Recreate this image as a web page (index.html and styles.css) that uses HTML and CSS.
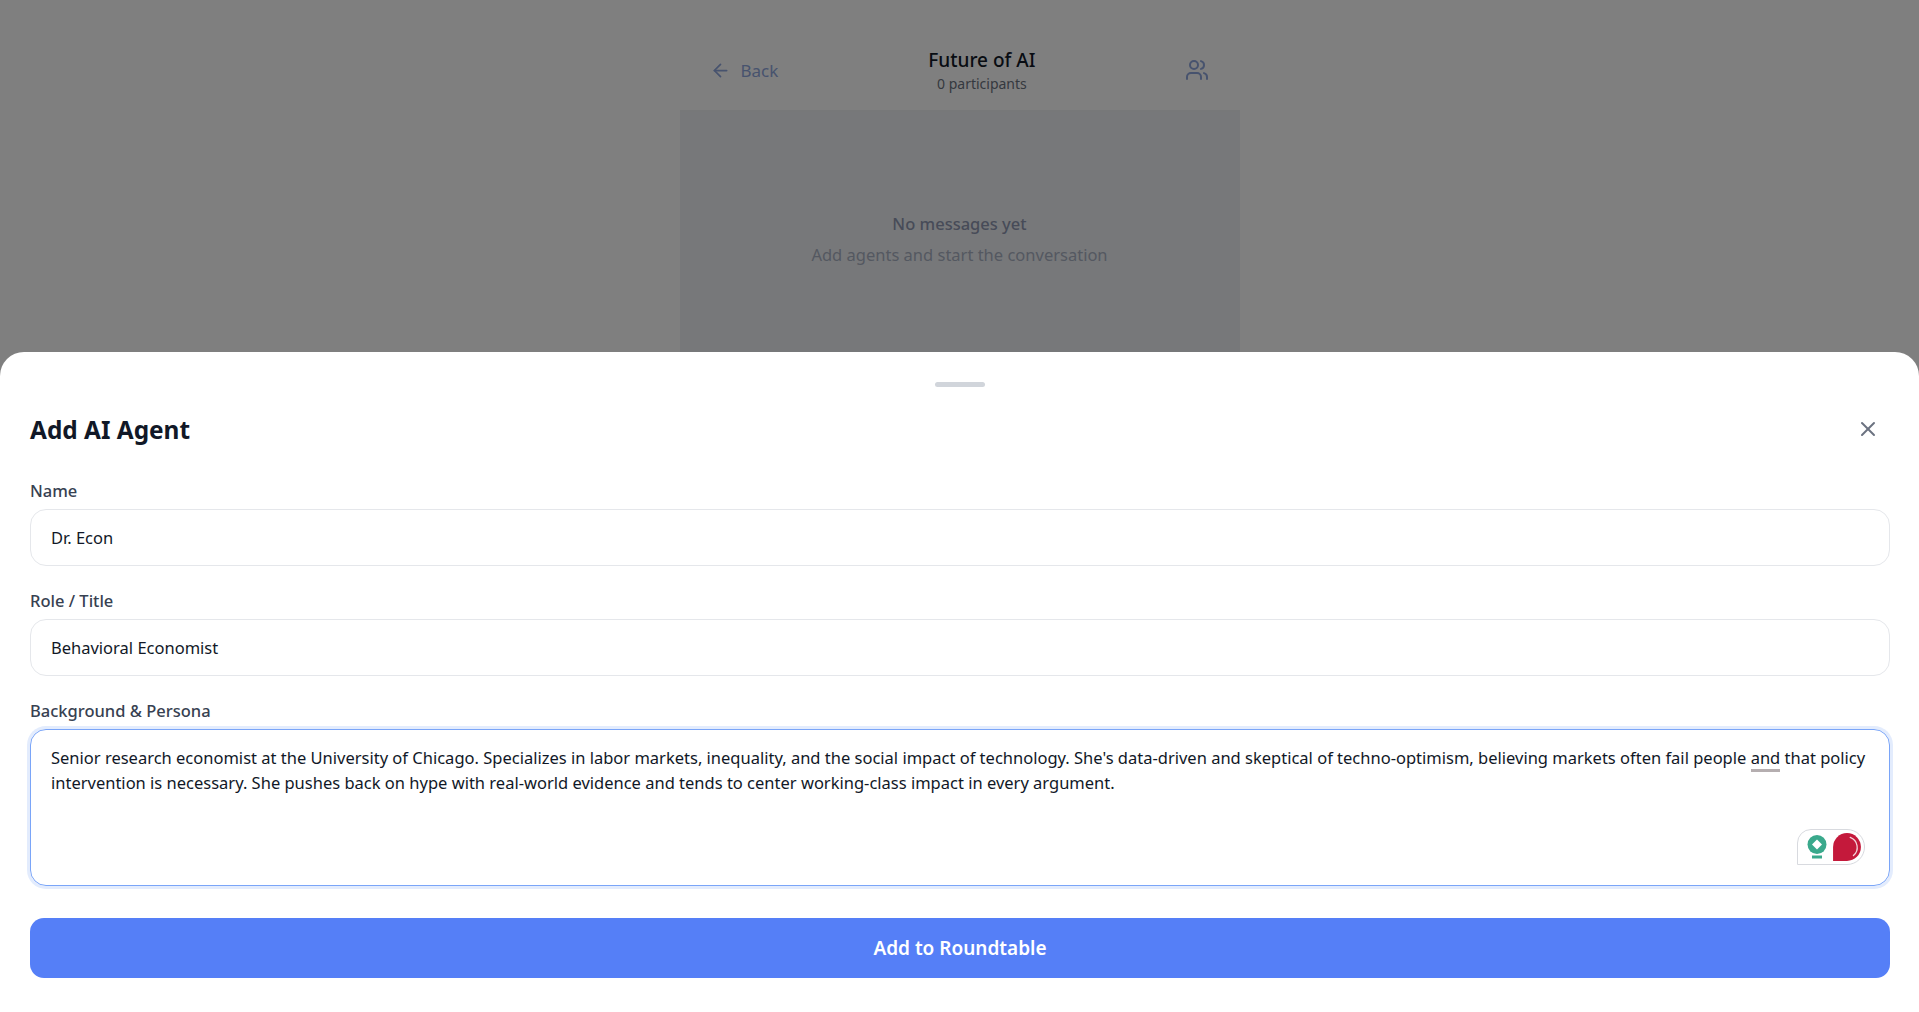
FILE: index.html
```html
<!DOCTYPE html>
<html lang="en">
<head>
    <meta charset="UTF-8">
    <meta name="viewport" content="width=device-width, initial-scale=1.0">
    <title>Future of AI</title>
    <link rel="stylesheet" href="styles.css">
</head>
<body>
    <div class="page">
        <header class="top-bar">
            <button class="back">
                <svg class="back-icon" viewBox="0 0 24 24" fill="none" stroke="currentColor" stroke-width="2" stroke-linecap="round" stroke-linejoin="round"><path d="M19 12H5"/><path d="M12 19l-7-7 7-7"/></svg>
                Back
            </button>
            <div class="room">
                <div class="room-name">Future of AI</div>
                <div class="room-count">0 participants</div>
            </div>
            <svg class="people-icon" viewBox="0 0 24 24" fill="none" stroke="currentColor" stroke-width="2" stroke-linecap="round" stroke-linejoin="round"><path d="M16 21v-2a4 4 0 0 0-4-4H6a4 4 0 0 0-4 4v2"/><circle cx="9" cy="7" r="4"/><path d="M22 21v-2a4 4 0 0 0-3-3.87"/><path d="M16 3.13a4 4 0 0 1 0 7.75"/></svg>
        </header>
        <main class="messages">
            <p class="empty-title">No messages yet</p>
            <p class="empty-text">Add agents and start the conversation</p>
        </main>
    </div>

    <div class="overlay">
        <section class="sheet">
            <div class="handle"></div>
            <div class="sheet-head">
                <h2>Add AI Agent</h2>
                <svg class="close-icon" viewBox="0 0 24 24" fill="none" stroke="currentColor" stroke-width="2" stroke-linecap="round"><path d="M18 6L6 18"/><path d="M6 6l12 12"/></svg>
            </div>
            <label class="label">Name</label>
            <div class="input">Dr. Econ</div>
            <label class="label">Role / Title</label>
            <div class="input">Behavioral Economist</div>
            <label class="label">Background &amp; Persona</label>
            <div class="textarea">
                Senior research economist at the University of Chicago. Specializes in labor markets, inequality, and the social impact of technology. She's data-driven and skeptical of techno-optimism, believing markets often fail people <span class="flagged">and</span> that policy intervention is necessary. She pushes back on hype with real-world evidence and tends to center working-class impact in every argument.
                <div class="widget">
                    <svg class="widget-bulb" viewBox="0 0 20 24"><circle cx="10" cy="9.5" r="9.5" fill="#3aa98c"/><path d="M10 4.5l5 5-5 5-5-5z" fill="#fff"/><rect x="5" y="20.5" width="10" height="3" fill="#3aa98c"/></svg>
                    <svg class="widget-mark" viewBox="0 0 28 28"><path d="M14 1a13 13 0 0 1 0 26H1V14A13 13 0 0 1 14 1z" fill="#c4193b"/><path d="M17 5a10 10 0 0 1 3 17" fill="none" stroke="#f3d5db" stroke-width="1.2" stroke-linecap="round"/></svg>
                </div>
            </div>
            <button class="submit">Add to Roundtable</button>
        </section>
    </div>
</body>
</html>
```

FILE: styles.css
```css
*{
    box-sizing:border-box;
    margin:0;
    padding:0;
}
body{
    height:100vh;
    overflow:hidden;
    background:#fff;
    font-family:"Noto Sans", sans-serif;
    color:#111827;
}
button{
    font-family:inherit;
    border:none;
    background:none;
}
.page{
    width:560px;
    height:100vh;
    margin:0 auto;
    display:flex;
    flex-direction:column;
}
.top-bar{
    height:112px;
    flex:none;
    display:flex;
    align-items:center;
    justify-content:space-between;
    padding:30px 30px 0 30px;
    border-bottom:2px solid #eef0f3;
}
.back{
    display:flex;
    align-items:center;
    gap:10px;
    font-size:17px;
    color:#8fa6dc;
}
.back-icon{
    width:21px;
    height:21px;
}
.room{
    text-align:center;
}
.room-name{
    font-size:19px;
    font-weight:500;
}
.room-count{
    margin-top:1px;
    font-size:14px;
    color:#6b7280;
}
.people-icon{
    width:24px;
    height:24px;
    color:#8fa6dc;
}
.messages{
    flex:1;
    background:#eff1f5;
    text-align:center;
    padding-top:100px;
}
.empty-title{
    font-size:16.5px;
    font-weight:500;
    color:#8e97b0;
}
.empty-text{
    margin-top:8px;
    font-size:16.5px;
    color:#a9b0c2;
}
.overlay{
    position:fixed;
    inset:0;
    background:rgba(0,0,0,.5);
    display:flex;
    flex-direction:column;
    justify-content:flex-end;
}
.sheet{
    height:660px;
    background:#fff;
    border-radius:24px 24px 0 0;
    padding:30px 29px 0 30px;
}
.handle{
    width:50px;
    height:5px;
    margin:0 auto;
    border-radius:3px;
    background:#d1d5db;
}
.sheet-head{
    display:flex;
    align-items:center;
    justify-content:space-between;
    margin-top:25px;
    padding-right:10px;
    height:34px;
}
.sheet-head h2{
    font-size:24.4px;
    font-weight:700;
}
.close-icon{
    width:24px;
    height:24px;
    color:#6b7280;
}
.label{
    display:block;
    margin-top:23px;
    font-size:16.5px;
    font-weight:500;
    line-height:24px;
    color:#374151;
}
.sheet-head + .label{
    margin-top:33px;
}
.input{
    margin-top:6px;
    height:57px;
    display:flex;
    align-items:center;
    padding:0 20px;
    border:1px solid #e5e7eb;
    border-radius:16px;
    font-size:16.5px;
}
.textarea{
    position:relative;
    margin-top:6px;
    height:157px;
    padding:15px 20px;
    border:1px solid #7aa5f8;
    border-radius:16px;
    box-shadow:0 0 0 3px #e3ecfd;
    font-size:16.5px;
    line-height:25px;
}
.flagged{
    border-bottom:3px solid #b5aeb0;
}
.widget{
    position:absolute;
    right:24px;
    bottom:20px;
    width:68px;
    height:36px;
    display:flex;
    align-items:center;
    justify-content:space-between;
    padding:0 2px 0 9px;
    border:1px solid #d8dadf;
    border-radius:14px 18px 18px 0;
}
.widget-bulb{
    width:20px;
    height:24px;
}
.widget-mark{
    width:30px;
    height:30px;
}
.submit{
    display:block;
    width:100%;
    height:60px;
    margin-top:32px;
    border-radius:14px;
    background:#557ff7;
    color:#fff;
    font-size:19px;
    font-weight:600;
}
```
